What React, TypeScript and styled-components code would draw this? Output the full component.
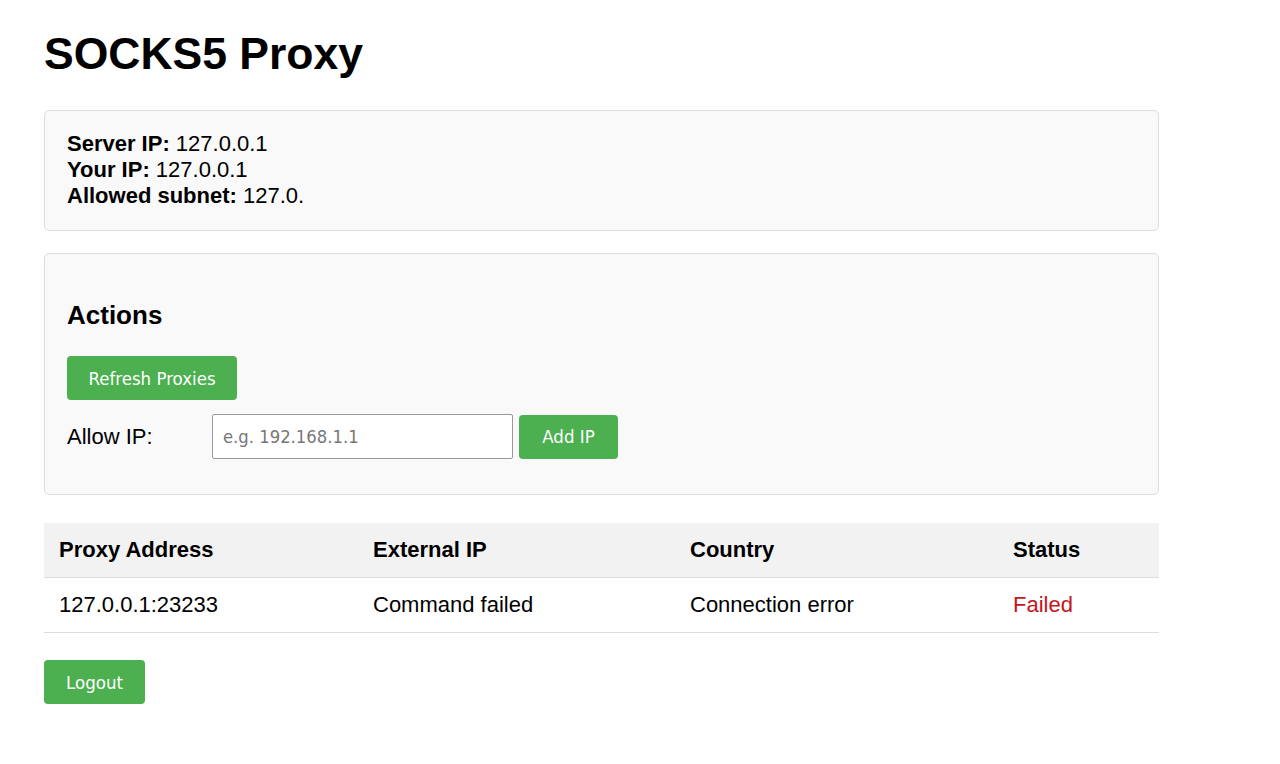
import React from "react";
import styled, { createGlobalStyle } from "styled-components";

const Global = createGlobalStyle`
  html, body { margin: 0; padding: 0; background: #fff; }
  body { font-family: "Liberation Sans", Arial, sans-serif; color: #000; }
`;

const Page = styled.div`
  width: 1115px;
  margin-left: 44px;
  padding-top: 28px;
`;

const Title = styled.h1`
  font-size: 44.5px;
  font-weight: bold;
  line-height: 52px;
  margin: 0 0 30px 0;
`;

const Panel = styled.div<{ $gap?: number }>`
  background: #f9f9f9;
  border: 1px solid #ddd;
  border-radius: 5px;
  padding: 20px 22px 21px 22px;
  margin-bottom: ${(p) => p.$gap ?? 22}px;
`;

const InfoLine = styled.div`
  font-size: 22px;
  line-height: 26px;
`;

const Heading = styled.h3`
  font-size: 26px;
  font-weight: bold;
  line-height: 30px;
  margin: 26px 0 26px 0;
`;

const Button = styled.button<{ $w: number }>`
  display: inline-flex;
  align-items: center;
  justify-content: center;
  width: ${(p) => p.$w}px;
  height: 44px;
  background: #4caf50;
  color: #fff;
  border: none;
  border-radius: 4px;
  font-family: "DejaVu Sans Condensed", "DejaVu Sans", sans-serif;
  font-size: 18.5px;
  padding: 0;
  cursor: pointer;
`;

const Row = styled.div`
  display: flex;
  align-items: center;
  margin-top: 14px;
  margin-bottom: 14px;
`;

const Label = styled.label`
  width: 145px;
  font-size: 22px;
`;

const Input = styled.input`
  box-sizing: border-box;
  width: 301px;
  height: 45px;
  border: 1px solid #999;
  border-radius: 2px;
  padding: 0 10px;
  font-family: "DejaVu Sans Condensed", "DejaVu Sans", sans-serif;
  font-size: 18.3px;
  margin-right: 6px;
  background: #fff;
  &::placeholder { color: #777; }
`;

const Table = styled.table`
  width: 100%;
  table-layout: fixed;
  border-collapse: collapse;
  margin-bottom: 27px;
  font-size: 22px;
`;

const Th = styled.th<{ $w: number }>`
  box-sizing: border-box;
  width: ${(p) => p.$w}px;
  text-align: left;
  background: #f2f2f2;
  padding: 15px;
  line-height: 24px;
  border-bottom: 1px solid #ddd;
  font-weight: bold;
`;

const Td = styled.td<{ $fail?: boolean }>`
  padding: 15px;
  line-height: 24px;
  border-bottom: 1px solid #ddd;
  color: ${(p) => (p.$fail ? "#c4161c" : "#000")};
`;

export default function App() {
  return (
    <>
      <Global />
      <Page>
        <Title>SOCKS5 Proxy</Title>
        <Panel>
          <InfoLine><b>Server IP:</b> 127.0.0.1</InfoLine>
          <InfoLine><b>Your IP:</b> 127.0.0.1</InfoLine>
          <InfoLine><b>Allowed subnet:</b> 127.0.</InfoLine>
        </Panel>
        <Panel $gap={28}>
          <Heading>Actions</Heading>
          <Button $w={170}>Refresh Proxies</Button>
          <Row>
            <Label>Allow IP:</Label>
            <Input placeholder="e.g. 192.168.1.1" />
            <Button $w={99}>Add IP</Button>
          </Row>
        </Panel>
        <Table>
          <thead>
            <tr>
              <Th $w={314}>Proxy Address</Th>
              <Th $w={317}>External IP</Th>
              <Th $w={323}>Country</Th>
              <Th $w={161}>Status</Th>
            </tr>
          </thead>
          <tbody>
            <tr>
              <Td>127.0.0.1:23233</Td>
              <Td>Command failed</Td>
              <Td>Connection error</Td>
              <Td $fail>Failed</Td>
            </tr>
          </tbody>
        </Table>
        <Button $w={101}>Logout</Button>
      </Page>
    </>
  );
}
